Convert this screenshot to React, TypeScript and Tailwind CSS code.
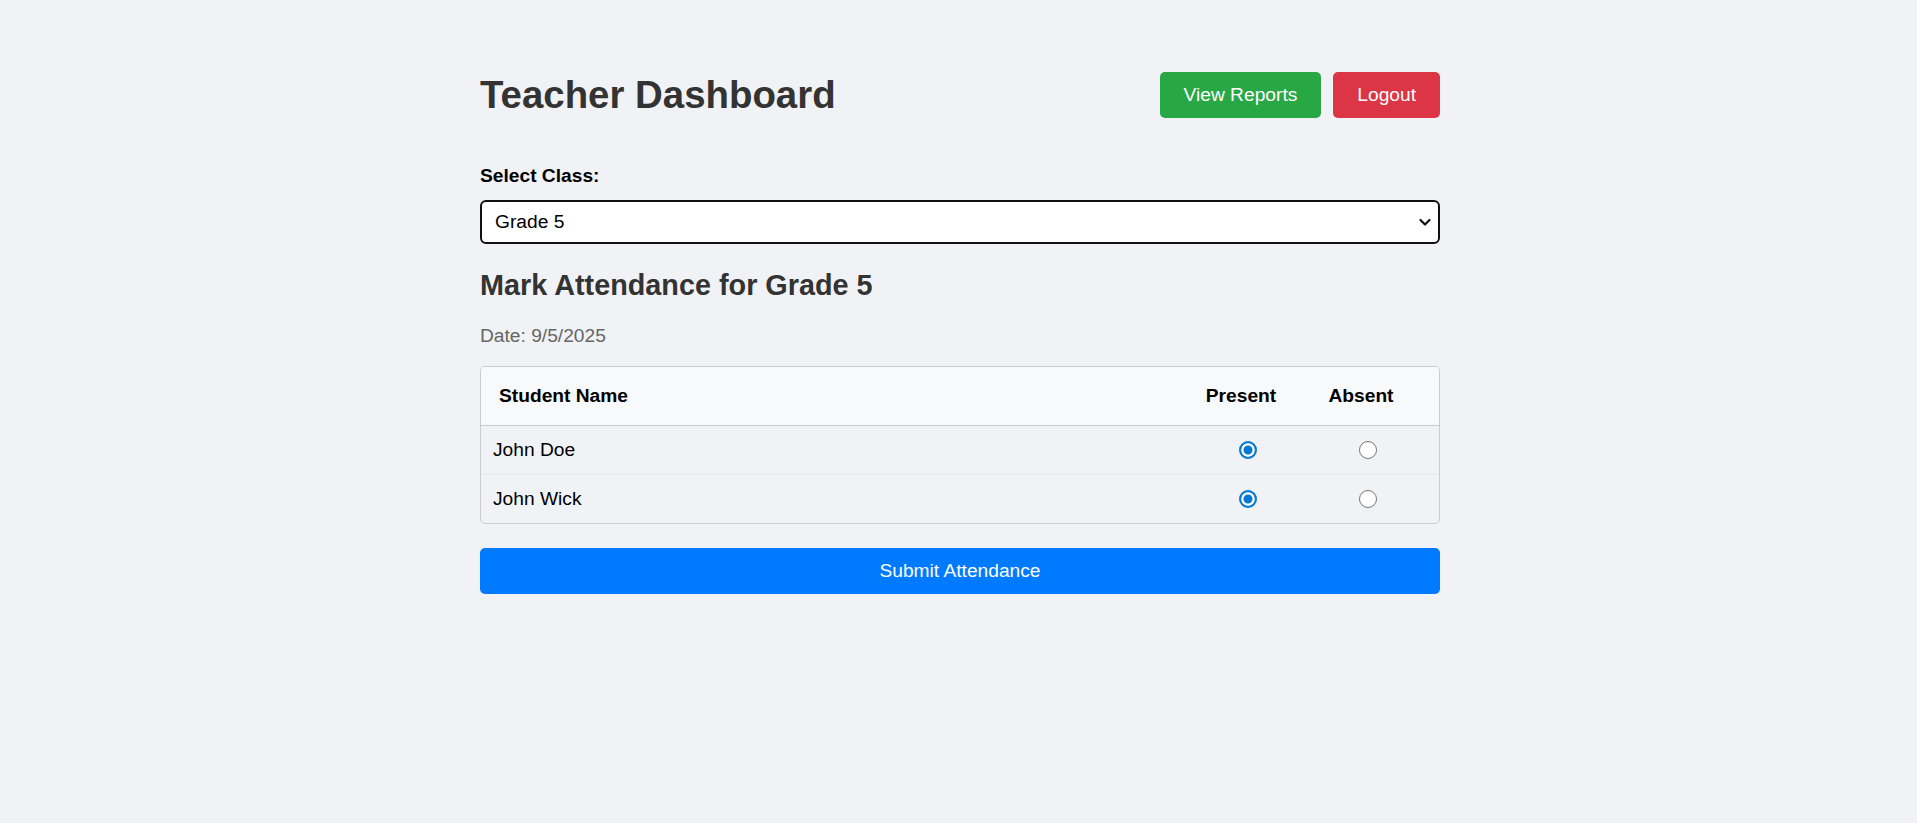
import React, { useState } from 'react';

type Student = { id: number; name: string };

const students: Student[] = [
    { id: 1, name: 'John Doe' },
    { id: 2, name: 'John Wick' },
];

const radioClass =
    'm-0 h-[18px] w-[18px] cursor-pointer appearance-none rounded-full border-[1.5px] border-[#767676] bg-white checked:border-2 checked:border-[#0078d4] checked:bg-[#0078d4] checked:shadow-[inset_0_0_0_2.5px_#fff]';

const App: React.FC = () => {
    const [selectedClass, setSelectedClass] = useState('Grade 5');
    const [attendance, setAttendance] = useState<Record<number, 'present' | 'absent'>>({
        1: 'present',
        2: 'present',
    });

    return (
        <div className="min-h-screen bg-[#f0f2f5] font-['Liberation_Sans',Arial,sans-serif]">
            <div className="mx-auto w-[963px] pl-[3px] pt-[72px]">
                {/* Header */}
                <header className="flex h-[46px] items-center justify-between">
                    <h1 className="text-[38.4px] leading-[44px] font-bold text-[#333]">Teacher Dashboard</h1>
                    <div className="flex gap-3">
                        <button className="rounded-[5px] bg-[#28a745] px-6 py-3 text-[19.2px] leading-[22px] text-white">
                            View Reports
                        </button>
                        <button className="rounded-[5px] bg-[#dc3545] px-6 py-3 text-[19.2px] leading-[22px] text-white">
                            Logout
                        </button>
                    </div>
                </header>

                {/* Class select */}
                <label className="mt-[47px] mb-[13px] block text-[19.2px] leading-[22px] font-bold text-black">
                    Select Class:
                </label>
                <div className="relative">
                    <select
                        value={selectedClass}
                        onChange={(e) => setSelectedClass(e.target.value)}
                        className="h-[44px] w-full appearance-none rounded-[6px] border-2 border-[#111] bg-white pr-8 pl-[13px] text-[19.2px] text-black"
                    >
                        <option>Grade 5</option>
                        <option>Grade 6</option>
                        <option>Grade 7</option>
                    </select>
                    <svg
                        className="pointer-events-none absolute top-1/2 right-[8px] h-[14px] w-[14px] -translate-y-1/2"
                        viewBox="0 0 14 14"
                        fill="none"
                        stroke="#111"
                        strokeWidth="2.2"
                        strokeLinecap="round"
                        strokeLinejoin="round"
                    >
                        <path d="M2.5 5l4.5 4.5L11.5 5" />
                    </svg>
                </div>

                <h2 className="mt-[25px] text-[28.8px] leading-[33px] font-bold text-[#333]">
                    Mark Attendance for {selectedClass}
                </h2>
                <p className="mt-[23px] text-[19.2px] leading-[22px] text-[#666]">Date: 9/5/2025</p>

                {/* Attendance table */}
                <div className="mt-[19px] overflow-hidden rounded-[5px] border border-[#ccc]">
                    <div className="flex border-b border-[#ccc] bg-[#f8f9fa] py-[18px] pr-[18px] text-[19.2px] leading-[22px] font-bold text-black">
                        <div className="flex-1 pl-[18px]">Student Name</div>
                        <div className="w-[120px] text-center">Present</div>
                        <div className="w-[120px] text-center">Absent</div>
                    </div>
                    {students.map((s, i) => (
                        <div
                            key={s.id}
                            className={`flex items-center py-[13px] pr-[18px] text-[19.2px] leading-[22px] text-black ${
                                i < students.length - 1 ? 'border-b border-[#e6e8eb]' : ''
                            }`}
                        >
                            <div className="flex-1 pl-[12px]">{s.name}</div>
                            <div className="flex w-[120px] justify-center pl-[14px]">
                                <input
                                    type="radio"
                                    name={`att-${s.id}`}
                                    checked={attendance[s.id] === 'present'}
                                    onChange={() => setAttendance({ ...attendance, [s.id]: 'present' })}
                                    className={radioClass}
                                />
                            </div>
                            <div className="flex w-[120px] justify-center pl-[14px]">
                                <input
                                    type="radio"
                                    name={`att-${s.id}`}
                                    checked={attendance[s.id] === 'absent'}
                                    onChange={() => setAttendance({ ...attendance, [s.id]: 'absent' })}
                                    className={radioClass}
                                />
                            </div>
                        </div>
                    ))}
                </div>

                <button className="mt-[24px] h-[46px] w-full rounded-[5px] bg-[#007bff] text-[19.2px] text-white">
                    Submit Attendance
                </button>
            </div>
        </div>
    );
};

export default App;
